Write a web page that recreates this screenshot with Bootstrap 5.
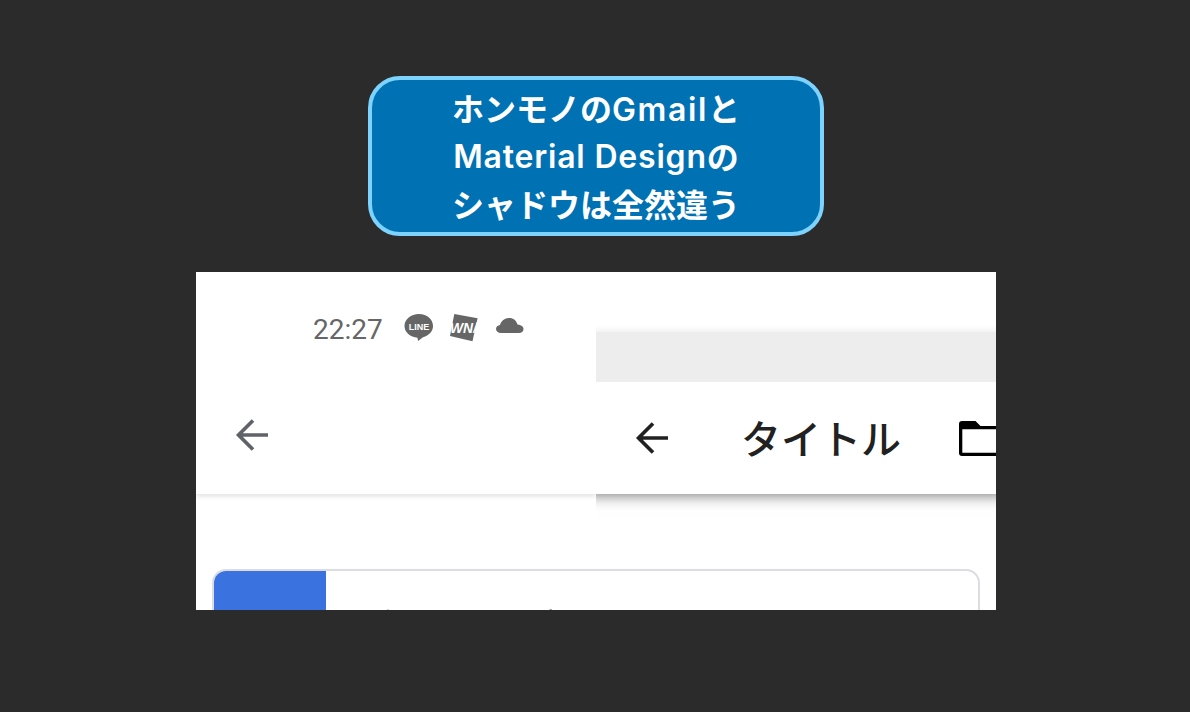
<!DOCTYPE html>
<html lang="ja">
<head>
<meta charset="utf-8">
<title>Shadow</title>
<link href="https://cdn.jsdelivr.net/npm/bootstrap@5.3.0/dist/css/bootstrap.min.css" rel="stylesheet">
<style>
html,body{height:100%}
body{background:#2b2b2b;overflow:hidden;font-family:"Noto Sans CJK JP",sans-serif}
.stage{padding:76px 0 0 2px;height:712px}
.callout{width:456px;height:160px;background:#0071b3;border:4px solid #7dd3fd;border-radius:32px;color:#fff;font-weight:600;font-size:32px}
.callout-lines{margin-top:-2px}
.line{display:block;height:48px;line-height:48px;white-space:nowrap}
.latin{font-family:"Inter","Noto Sans CJK JP",sans-serif;line-height:1;letter-spacing:.8px;vertical-align:1px}
.latin-wide{letter-spacing:1.6px;vertical-align:0}
.shot{width:800px;height:338px;margin-top:36px;background:#fff;overflow:hidden}
.topper{height:222px}
.half{width:400px}
.left-head{box-shadow:0 2px 5px rgba(0,0,0,.13);clip-path:inset(0 0 -12px 0)}
.status{height:110px;padding:42px 0 0 117px;color:#666;font-family:"Roboto",sans-serif;font-size:28px;line-height:32px}
.status-time{width:90px}
.ic{flex:none;display:block}
.ic-wn{margin-left:15px}
.ic-cloud{margin-left:17px}
.back-l{padding:35px 0 0 36px}
.right-head{position:relative;z-index:1;clip-path:inset(0 0 -24px 0)}
.blank{height:60px}
.greybar{height:50px;background:#ededed;box-shadow:0 8px 8px 8px rgba(0,0,0,.1)}
.titlebar{position:relative;height:112px;background:#fff;box-shadow:0 -10px 14px 11px rgba(0,0,0,.55);clip-path:inset(0 0 -24px 0);padding-left:36px}
.title-text{font-weight:500;font-size:40px;line-height:56px;color:#212121;margin:-3px 0 0 73px;white-space:nowrap}
.folder{margin-left:58px}
.mailcard{margin:75px 16px 0;height:200px;border:2px solid #dcdce2;border-radius:14px;overflow:hidden}
.mail-blue{width:112px;background:#3a73e0}
.mail-text{padding:32px 0 0 50px;font-size:23px;line-height:30px;color:#333;white-space:nowrap}
</style>
</head>
<body>
<main class="stage d-flex flex-column align-items-center">
  <div class="callout d-flex align-items-center justify-content-center text-center">
    <div class="callout-lines">
      <span class="line">ホンモノの<span class="latin latin-wide">Gmail</span>と</span>
      <span class="line"><span class="latin">Material Design</span>の</span>
      <span class="line">シャドウは全然違う</span>
    </div>
  </div>
  <section class="shot">
    <div class="topper d-flex">
      <div class="half left-head">
        <div class="status d-flex align-items-start">
          <span class="status-time">22:27</span>
          <svg class="ic" width="32" height="28" viewBox="0 0 32 28"><path fill="#666" d="M16 0C8 0 1.500 5.300 1.500 12c0 6.300 5.800 11.300 13 11.700l.5 3.300 5-3.800c6-1.700 10-5.800 10-11.200C30 5.300 24 0 16 0z"/><text x="16" y="15.500" text-anchor="middle" font-family="Liberation Sans" font-weight="700" font-size="9" fill="#fff">LINE</text></svg>
          <svg class="ic ic-wn" width="28" height="28" viewBox="0 0 28 28"><path fill="#666" d="M4.300 0 27.600 4.300 22.500 27.300 0 22z"/><text x="13.500" y="19" text-anchor="middle" font-family="Liberation Sans" font-weight="700" font-style="italic" font-size="14" fill="#fff" textLength="27" lengthAdjust="spacingAndGlyphs">WN/</text></svg>
          <svg class="ic ic-cloud" width="30" height="20" viewBox="0 0 30 20"><path fill="#666" d="M6 19C3 19 1 17.200 1 15c0-2.200 1.700-3.800 4-4C6.200 7 9.500 4 14 4c4.500 0 7.500 2.700 8.500 6.500 3.500.3 6 2 6 4.500 0 2.500-2 4-4.500 4z"/></svg>
        </div>
        <div class="back-l">
          <svg class="ic" width="36" height="36" viewBox="0 0 36 36"><path fill="none" stroke="#5f6368" stroke-width="3.600" d="M36 18H7M21 3.500 6.500 18 21 32.500"/></svg>
        </div>
      </div>
      <div class="half right-head">
        <div class="blank"></div>
        <div class="greybar"></div>
        <div class="titlebar d-flex align-items-center">
          <svg class="ic" width="36" height="36" viewBox="0 0 36 36"><path fill="none" stroke="#212121" stroke-width="3.600" d="M36 18H7M21 3.500 6.500 18 21 32.500"/></svg>
          <span class="title-text">タイトル</span>
          <svg class="ic folder" width="40" height="36" viewBox="0 0 40 36"><path d="M3 1h13.500l5 5H40v3.300H3.300V32.700H40V36H3a3 3 0 0 1-3-3V4a3 3 0 0 1 3-3z"/></svg>
        </div>
      </div>
    </div>
    <div class="mailcard d-flex">
      <div class="mail-blue"></div>
      <div class="mail-text">ホンモノのGmail</div>
    </div>
  </section>
</main>
<script src="https://cdn.jsdelivr.net/npm/bootstrap@5.3.0/dist/js/bootstrap.bundle.min.js"></script>
</body>
</html>
